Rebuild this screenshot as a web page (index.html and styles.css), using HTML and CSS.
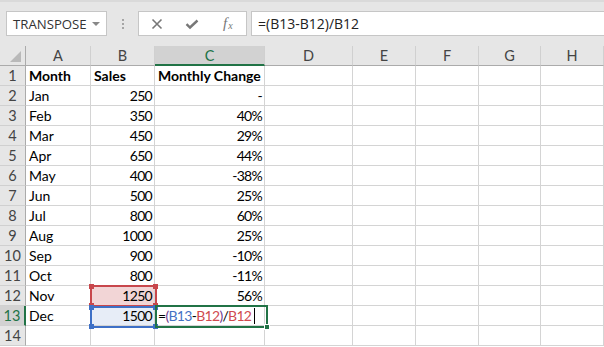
FILE: index.html
```html
<!DOCTYPE html>
<html>
<head>
<meta charset="utf-8">
<link rel="stylesheet" href="styles.css">
</head>
<body>
<div class="app">
  <div class="toolbar">
    <div class="namebox">
      <span class="name">TRANSPOSE</span>
      <span class="caret"></span>
    </div>
    <div class="grip"><i></i><i></i><i></i></div>
    <div class="fxbox">
      <svg class="ico" width="12" height="12" viewBox="0 0 12 12"><path d="M1.5 1.5L10.5 10.5M10.5 1.5L1.5 10.5" stroke="#777" stroke-width="1.6" fill="none"/></svg>
      <svg class="ico" width="14" height="12" viewBox="0 0 14 12"><path d="M1.5 6.2L5 9.5L12.5 2.5" stroke="#777" stroke-width="2.4" fill="none"/></svg>
      <span class="fx">f<sub>x</sub></span>
    </div>
    <div class="formula">=(B13-B12)/B12</div>
  </div>
  <div class="sheet">
    <div class="grid">
      <div class="hd corner"><span class="tri"></span></div>
      <div class="hd col">A</div><div class="hd col">B</div><div class="hd col sel">C</div><div class="hd col">D</div><div class="hd col">E</div><div class="hd col">F</div><div class="hd col">G</div><div class="hd col">H</div>

      <div class="hd row">1</div><div class="c b">Month</div><div class="c b">Sales</div><div class="c b">Monthly Change</div><div class="c"></div><div class="c"></div><div class="c"></div><div class="c"></div><div class="c"></div>
      <div class="hd row">2</div><div class="c">Jan</div><div class="c r">250</div><div class="c r">-</div><div class="c"></div><div class="c"></div><div class="c"></div><div class="c"></div><div class="c"></div>
      <div class="hd row">3</div><div class="c">Feb</div><div class="c r">350</div><div class="c r">40%</div><div class="c"></div><div class="c"></div><div class="c"></div><div class="c"></div><div class="c"></div>
      <div class="hd row">4</div><div class="c">Mar</div><div class="c r">450</div><div class="c r">29%</div><div class="c"></div><div class="c"></div><div class="c"></div><div class="c"></div><div class="c"></div>
      <div class="hd row">5</div><div class="c">Apr</div><div class="c r">650</div><div class="c r">44%</div><div class="c"></div><div class="c"></div><div class="c"></div><div class="c"></div><div class="c"></div>
      <div class="hd row">6</div><div class="c">May</div><div class="c r">400</div><div class="c r">-38%</div><div class="c"></div><div class="c"></div><div class="c"></div><div class="c"></div><div class="c"></div>
      <div class="hd row">7</div><div class="c">Jun</div><div class="c r">500</div><div class="c r">25%</div><div class="c"></div><div class="c"></div><div class="c"></div><div class="c"></div><div class="c"></div>
      <div class="hd row">8</div><div class="c">Jul</div><div class="c r">800</div><div class="c r">60%</div><div class="c"></div><div class="c"></div><div class="c"></div><div class="c"></div><div class="c"></div>
      <div class="hd row">9</div><div class="c">Aug</div><div class="c r">1000</div><div class="c r">25%</div><div class="c"></div><div class="c"></div><div class="c"></div><div class="c"></div><div class="c"></div>
      <div class="hd row">10</div><div class="c">Sep</div><div class="c r">900</div><div class="c r">-10%</div><div class="c"></div><div class="c"></div><div class="c"></div><div class="c"></div><div class="c"></div>
      <div class="hd row">11</div><div class="c">Oct</div><div class="c r">800</div><div class="c r">-11%</div><div class="c"></div><div class="c"></div><div class="c"></div><div class="c"></div><div class="c"></div>
      <div class="hd row">12</div><div class="c">Nov</div><div class="c r red">1250</div><div class="c r">56%</div><div class="c"></div><div class="c"></div><div class="c"></div><div class="c"></div><div class="c"></div>
      <div class="hd row sel">13</div><div class="c">Dec</div><div class="c r blue">1500</div><div class="c edit"><span>=</span><span class="p">(</span><span class="cb">B13</span><span>-</span><span class="cr">B12</span><span class="p">)</span><span>/</span><span class="cr">B12</span><span class="cursor"></span></div><div class="c"></div><div class="c"></div><div class="c"></div><div class="c"></div><div class="c"></div>
      <div class="hd row">14</div><div class="c"></div><div class="c"></div><div class="c"></div><div class="c"></div><div class="c"></div><div class="c"></div><div class="c"></div><div class="c"></div>
    </div>
    <div class="ref ref-red"><i class="h tl"></i><i class="h tr"></i><i class="h bl"></i><i class="h br"></i></div>
    <div class="ref ref-blue"><i class="h tl"></i><i class="h tr"></i><i class="h bl"></i><i class="h br"></i></div>
    <div class="ref ref-green"><i class="h br"></i></div>
  </div>
</div>
</body>
</html>
```
FILE: styles.css
```css
* { box-sizing: border-box; }
html, body { margin: 0; padding: 0; }
body { width: 604px; height: 347px; overflow: hidden; background: #fff; }
.app { width: 604px; }

.toolbar {
  height: 46px;
  background: #e6e6e6;
  border-top: 2px solid #dadada;
  display: flex;
  align-items: flex-start;
  padding-top: 9px;
  padding-left: 6px;
  font-family: "Open Sans", "Noto Sans", sans-serif;
}
.namebox {
  width: 101px; height: 25px;
  background: #fff;
  border: 1px solid #c6c6c6;
  display: flex; align-items: center;
  padding-left: 6px;
  position: relative;
}
.name { font-size: 13.2px; color: #333; }
.caret {
  position: absolute; right: 6px; top: 10px;
  width: 0; height: 0;
  border-left: 4px solid transparent; border-right: 4px solid transparent;
  border-top: 4px solid #888;
}
.grip {
  width: 31px; height: 25px;
  display: flex; flex-direction: column; align-items: center; justify-content: center; gap: 2px;
}
.grip i { display: block; width: 2px; height: 2px; background: #a5a5a5; }
.fxbox {
  width: 109px; height: 25px;
  background: #fff; border: 1px solid #c6c6c6;
  display: flex; align-items: center;
  padding-left: 12px;
  gap: 22px;
}
.fxbox .ico { flex: none; }
.fx { font-family: "Liberation Serif", serif; font-style: italic; font-size: 15px; color: #777; margin-left: 2px; }
.fx sub { font-size: 10px; vertical-align: -1px; margin-left: 1px; }
.formula {
  margin-left: 4px;
  flex: 1; height: 25px;
  background: #fff; border: 1px solid #c6c6c6; border-right: none;
  font-size: 14px; color: #222;
  padding-left: 6px;
  display: flex; align-items: center;
}

.sheet { position: relative; }
.grid {
  display: grid;
  grid-template-columns: 26px 65px 64px 110px 88px 63px 63px 62px 63px;
  grid-auto-rows: 20px;
  font-family: Lato, "Open Sans", sans-serif;
  font-size: 14px;
  color: #000;
}
.hd {
  background: #e6e6e6;
  color: #444;
  display: flex; align-items: center; justify-content: center;
  font-size: 14.5px;
}
.col { border-right: 1px solid #d0d0d0; border-bottom: 1px solid #ababab; }
.col.sel { background: #d2d2d2; color: #217346; border-bottom: 2px solid #217346; }
.corner { border-right: 1px solid #ababab; border-bottom: 1px solid #ababab; position: relative; }
.tri {
  position: absolute; right: 4px; bottom: 3px;
  width: 0; height: 0;
  border-left: 11px solid transparent; border-bottom: 11px solid #b9b9b9;
}
.row { border-right: 1px solid #ababab; border-bottom: 1px solid #d0d0d0; }
.row.sel { background: #d2d2d2; color: #217346; border-right: 2px solid #217346; }
.c {
  border-right: 1px solid #d4d4d4; border-bottom: 1px solid #d4d4d4;
  padding: 0 3px;
  line-height: 19px;
  white-space: nowrap; overflow: visible;
}
.c.b { font-weight: bold; }
.c.r { text-align: right; letter-spacing: -0.7px; padding-right: 2px; }
.c.red { background: #f2d5d6; }
.c.blue { background: #e7edf7; }
.edit { padding-left: 3px; letter-spacing: -0.7px; }
.cb { color: #4472c4; }
.cr { color: #d04a4f; }
.p { color: #6c3a8e; }
.cursor { display: inline-block; width: 1px; height: 16px; background: #000; vertical-align: -3px; margin-left: 3px; }

.ref { position: absolute; border: 2px solid; pointer-events: none; }
.ref-red { left: 90px; top: 239px; width: 67px; height: 22px; border-color: #c8474c; }
.ref-blue { left: 90px; top: 260px; width: 67px; height: 22px; border-color: #3e70c6; }
.ref-green { left: 155px; top: 259px; width: 113px; height: 23px; border-color: #217346; }
.h { position: absolute; width: 5px; height: 5px; }
.ref-red .h { background: #c8474c; }
.ref-blue .h { background: #3e70c6; }
.ref-green .h { background: #217346; border: 1px solid #fff; width: 6px; height: 6px; }
.tl { left: -3px; top: -3px; }
.tr { right: -3px; top: -3px; }
.bl { left: -3px; bottom: -3px; }
.br { right: -3px; bottom: -3px; }
.ref-green .br { right: -4px; bottom: -4px; }
```
